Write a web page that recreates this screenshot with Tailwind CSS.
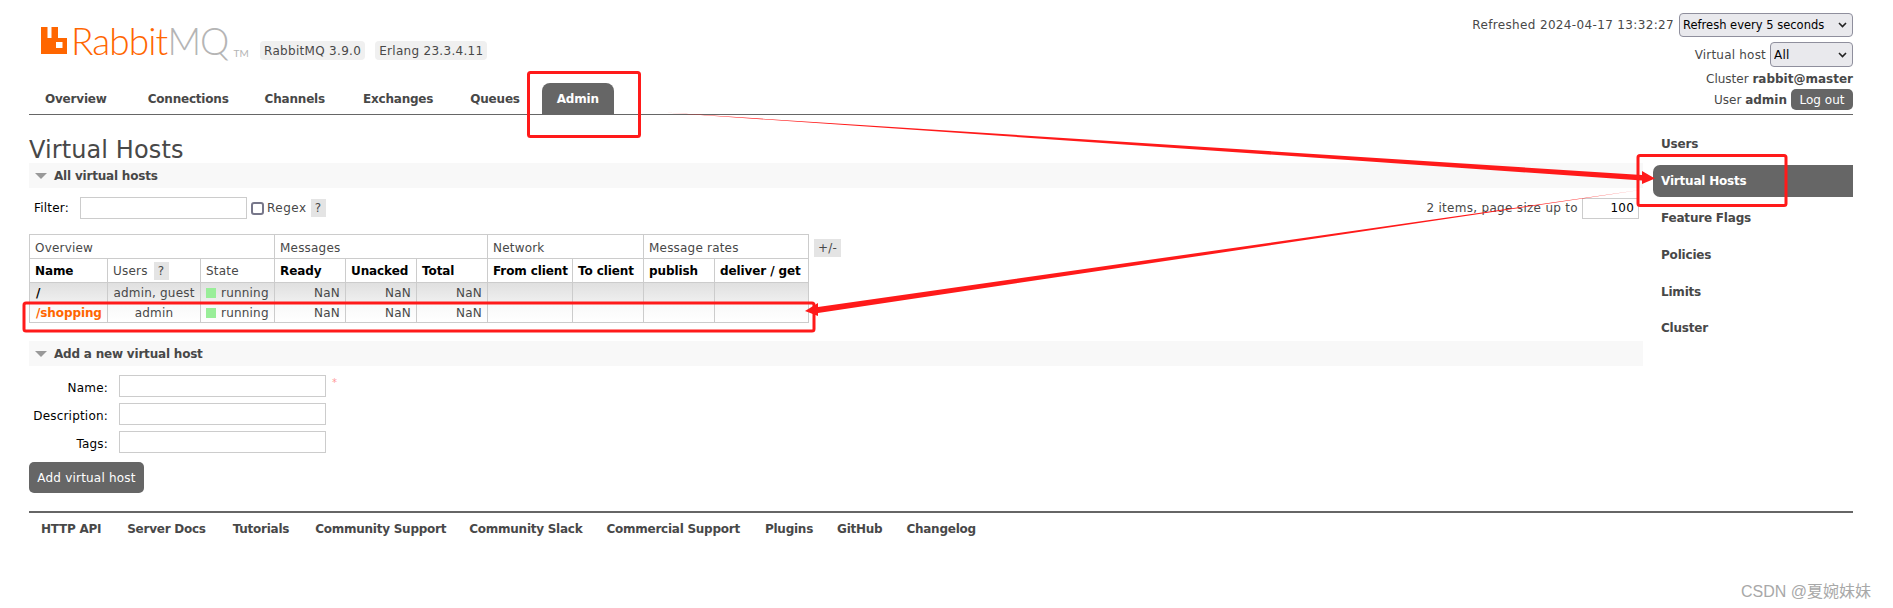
<!DOCTYPE html>
<html lang="en">

<head>
    <meta charset="UTF-8">
    <title>RabbitMQ Management</title>
    <script src="https://cdn.jsdelivr.net/npm/@tailwindcss/browser@4"></script>
</head>

<body class="relative h-[608px] w-[1893px] overflow-hidden bg-white font-['DejaVu_Sans',sans-serif] text-[12px] leading-[14px] tracking-[0.2px] text-[#484848]">

    <!-- header -->
    <header class="ml-[29px] flex h-[115px] w-[1824px] justify-between border-b border-[#666]">
        <div class="flex flex-col justify-between">
            <div class="flex pt-[20px] pl-[12px]">
                <svg width="26" height="27" viewBox="0 0 26 27" class="mt-[7px]">
                    <path fill="#ff6600" fill-rule="evenodd" d="M0 0h6.5v11h4V0H17v11h9v16H0z M15 15v6h6.5v-6z" />
                </svg>
                <span class="mt-[-2px] ml-[4px] font-['Lato',sans-serif] text-[37px] leading-[46px] font-light tracking-[-0.9px] text-[#ff6600]">Rabbit<span class="text-[#b5b5b5]">MQ</span></span>
                <span class="mt-[27px] ml-[5px] font-['Lato',sans-serif] text-[10px] leading-[12px] text-[#b5b5b5]">TM</span>
                <span class="mt-[21px] ml-[11px] h-[19px] rounded-[4px] bg-[#f0f0f0] px-[4px] leading-[20px] tracking-[0.3px]">RabbitMQ 3.9.0</span>
                <span class="mt-[21px] ml-[10px] h-[19px] rounded-[4px] bg-[#f0f0f0] px-[4px] leading-[20px] tracking-[0.3px]">Erlang 23.3.4.11</span>
            </div>
            <nav class="flex h-[32px] items-center pt-[1px] pl-[16px] font-bold tracking-[-0.2px]">
                <a class="mr-[41px]">Overview</a>
                <a class="mr-[36px]">Connections</a>
                <a class="mr-[38px]">Channels</a>
                <a class="mr-[37px]">Exchanges</a>
                <a class="mr-[22px]">Queues</a>
                <a class="flex h-[32px] w-[72px] items-center justify-center rounded-t-[8px] bg-[#666] text-white">Admin</a>
            </nav>
        </div>
        <div class="flex flex-col items-end pt-[13px]">
            <div class="flex items-center gap-[5px]">
                <span class="tracking-[0.35px]">Refreshed 2024-04-17 13:32:27</span>
                <div class="relative">
                    <select class="block h-[24px] w-[174px] appearance-none rounded-[4px] border border-[#8f8f9d] bg-[#e9e9ed] pl-[3px] text-[11.5px] tracking-normal text-black">
                        <option>Refresh every 5 seconds</option>
                    </select>
                    <svg class="pointer-events-none absolute top-[9px] right-[6px]" width="9" height="6" viewBox="0 0 9 6" fill="none" stroke="#222" stroke-width="1.6"><path d="M1 1l3.5 3.5L8 1" /></svg>
                </div>
            </div>
            <div class="mt-[5px] flex items-center gap-[4px]">
                <span>Virtual host</span>
                <div class="relative">
                    <select class="block h-[25px] w-[83px] appearance-none rounded-[4px] border border-[#8f8f9d] bg-[#e9e9ed] pl-[3px] text-black">
                        <option>All</option>
                    </select>
                    <svg class="pointer-events-none absolute top-[10px] right-[6px]" width="9" height="6" viewBox="0 0 9 6" fill="none" stroke="#222" stroke-width="1.6"><path d="M1 1l3.5 3.5L8 1" /></svg>
                </div>
            </div>
            <div class="mt-[5px] tracking-normal">Cluster <b>rabbit@master</b></div>
            <div class="mt-[3px] flex items-center gap-[4px] tracking-normal">
                <span>User <b>admin</b></span>
                <button class="h-[21px] w-[62px] rounded-[5px] bg-[#666] text-white">Log out</button>
            </div>
        </div>
    </header>

    <div class="ml-[29px] flex w-[1824px]">
        <!-- main content -->
        <main class="w-[1614px]">
            <h1 class="mt-[22px] h-[26px] text-[24px] leading-[27px] font-normal tracking-[0.1px]">Virtual Hosts</h1>

            <h2 class="flex h-[25px] items-center bg-[#f8f8f8] pl-[6px] text-[12px] font-bold tracking-[-0.2px]">
                <span class="mr-[7px] h-0 w-0 border-x-[6px] border-t-[6px] border-x-transparent border-t-[#999]"></span>
                All virtual hosts
            </h2>

            <div class="mt-[8px] flex h-[24px] items-center pl-[5px]">
                <span class="text-black">Filter:</span>
                <input type="text" class="ml-[11px] h-[22px] w-[167px] border border-[#ccc] bg-white">
                <span class="ml-[4px] h-[13px] w-[13px] rounded-[3px] border-2 border-[#77778a] bg-white"></span>
                <span class="ml-[3px] tracking-[0.5px]">Regex</span>
                <span class="ml-[4px] flex h-[18px] w-[15px] items-center justify-center bg-[#e4e4e4]">?</span>
                <span class="mr-[4px] ml-auto tracking-[0.3px]">2 items, page size up to</span>
                <input type="text" value="100" class="mr-[4px] h-[21px] w-[57px] border border-[#ccc] bg-white pr-[4px] text-right text-black">
            </div>

            <div class="mt-[14px] flex items-start">
                <table class="table-fixed border-collapse border border-[#ccc]">
                    <colgroup>
                        <col class="w-[78px]">
                        <col class="w-[93px]">
                        <col class="w-[74px]">
                        <col class="w-[71px]">
                        <col class="w-[71px]">
                        <col class="w-[71px]">
                        <col class="w-[85px]">
                        <col class="w-[71px]">
                        <col class="w-[71px]">
                        <col class="w-[94px]">
                    </colgroup>
                    <tr class="h-[24px] text-left">
                        <th colspan="3" class="border border-[#ccc] pt-[2px] pl-[5px] font-normal">Overview</th>
                        <th colspan="3" class="border border-[#ccc] pt-[2px] pl-[5px] font-normal">Messages</th>
                        <th colspan="2" class="border border-[#ccc] pt-[2px] pl-[5px] font-normal">Network</th>
                        <th colspan="2" class="border border-[#ccc] pt-[2px] pl-[5px] font-normal">Message rates</th>
                    </tr>
                    <tr class="h-[24px] text-left tracking-[-0.1px] text-black">
                        <th class="border border-[#ccc] pt-[1px] pl-[5px]">Name</th>
                        <th class="border border-[#ccc] pt-[1px] pl-[5px] font-normal tracking-[0.2px] text-[#484848]">Users <span class="ml-[2px] inline-block h-[18px] w-[15px] bg-[#e4e4e4] text-center leading-[18px]">?</span></th>
                        <th class="border border-[#ccc] pt-[1px] pl-[5px] font-normal tracking-[0.2px] text-[#484848]">State</th>
                        <th class="border border-[#ccc] pt-[1px] pl-[5px]">Ready</th>
                        <th class="border border-[#ccc] pt-[1px] pl-[5px]">Unacked</th>
                        <th class="border border-[#ccc] pt-[1px] pl-[5px]">Total</th>
                        <th class="border border-[#ccc] pt-[1px] pl-[5px]">From client</th>
                        <th class="border border-[#ccc] pt-[1px] pl-[5px]">To client</th>
                        <th class="border border-[#ccc] pt-[1px] pl-[5px]">publish</th>
                        <th class="border border-[#ccc] pt-[1px] pl-[5px]">deliver / get</th>
                    </tr>
                    <tr class="h-[20px] bg-linear-to-b from-[#e0e0e0] to-[#f0f0f0]">
                        <td class="border border-[#ccc] pl-[6px] font-bold text-black">/</td>
                        <td class="border border-[#ccc] text-center">admin, guest</td>
                        <td class="border border-[#ccc] pl-[5px]"><span class="flex items-center gap-[5px]"><i class="h-[10px] w-[10px] bg-[#99ee99]"></i>running</span></td>
                        <td class="border border-[#ccc] pr-[5px] text-right">NaN</td>
                        <td class="border border-[#ccc] pr-[5px] text-right">NaN</td>
                        <td class="border border-[#ccc] pr-[5px] text-right">NaN</td>
                        <td class="border border-[#ccc]"></td>
                        <td class="border border-[#ccc]"></td>
                        <td class="border border-[#ccc]"></td>
                        <td class="border border-[#ccc]"></td>
                    </tr>
                    <tr class="h-[20px] bg-linear-to-b from-[#f8f8f8] to-white">
                        <td class="border border-[#ccc] pl-[6px] font-bold tracking-[-0.1px] text-[#ff6600]">/shopping</td>
                        <td class="border border-[#ccc] text-center">admin</td>
                        <td class="border border-[#ccc] pl-[5px]"><span class="flex items-center gap-[5px]"><i class="h-[10px] w-[10px] bg-[#99ee99]"></i>running</span></td>
                        <td class="border border-[#ccc] pr-[5px] text-right">NaN</td>
                        <td class="border border-[#ccc] pr-[5px] text-right">NaN</td>
                        <td class="border border-[#ccc] pr-[5px] text-right">NaN</td>
                        <td class="border border-[#ccc]"></td>
                        <td class="border border-[#ccc]"></td>
                        <td class="border border-[#ccc]"></td>
                        <td class="border border-[#ccc]"></td>
                    </tr>
                </table>
                <span class="mt-[5px] ml-[5px] flex h-[18px] w-[27px] items-center justify-center bg-[#e4e4e4]">+/-</span>
            </div>

            <h2 class="mt-[18px] flex h-[25px] items-center bg-[#f8f8f8] pl-[6px] text-[12px] font-bold tracking-[-0.2px]">
                <span class="mr-[7px] h-0 w-0 border-x-[6px] border-t-[6px] border-x-transparent border-t-[#999]"></span>
                Add a new virtual host
            </h2>

            <form class="mt-[9px] flex flex-col gap-[6px] text-black">
                <div class="flex items-center">
                    <label class="mt-[4px] w-[79px] text-right">Name:</label>
                    <input type="text" class="ml-[11px] h-[22px] w-[207px] border border-[#ccc]">
                    <span class="mb-[6px] ml-[6px] text-[10px] text-[#ff9999]">*</span>
                </div>
                <div class="flex items-center">
                    <label class="mt-[4px] w-[79px] text-right">Description:</label>
                    <input type="text" class="ml-[11px] h-[22px] w-[207px] border border-[#ccc]">
                </div>
                <div class="flex items-center">
                    <label class="mt-[4px] w-[79px] text-right">Tags:</label>
                    <input type="text" class="ml-[11px] h-[22px] w-[207px] border border-[#ccc]">
                </div>
                <button type="button" class="mt-[3px] h-[31px] w-[115px] rounded-[5px] bg-[#666] text-white">Add virtual host</button>
            </form>
        </main>

        <!-- admin sidebar -->
        <aside class="mt-[13px] ml-[10px] flex w-[200px] flex-col font-bold tracking-[-0.2px]">
            <a class="flex h-[32px] items-center pl-[8px]">Users</a>
            <a class="mt-[5px] flex h-[32px] items-center rounded-l-[7px] bg-[#666] pl-[8px] text-white">Virtual Hosts</a>
            <a class="mt-[5px] flex h-[32px] items-center pl-[8px]">Feature Flags</a>
            <a class="mt-[5px] flex h-[32px] items-center pl-[8px]">Policies</a>
            <a class="mt-[5px] flex h-[32px] items-center pl-[8px]">Limits</a>
            <a class="mt-[4px] flex h-[32px] items-center pl-[8px]">Cluster</a>
        </aside>
    </div>

    <!-- footer -->
    <footer class="absolute top-[511px] left-[29px] flex h-[34px] w-[1824px] items-center gap-[24px] border-t-2 border-[#666] pl-[12px] font-bold tracking-[-0.25px]">
        <a>HTTP API</a>
        <a class="ml-[2px]">Server Docs</a>
        <a class="ml-[3px]">Tutorials</a>
        <a class="ml-[2px]">Community Support</a>
        <a class="ml-[-1px]">Community Slack</a>
        <a>Commercial Support</a>
        <a class="ml-[1px]">Plugins</a>
        <a>GitHub</a>
        <a>Changelog</a>
    </footer>

    <!-- red annotations drawn on top of the screenshot -->
    <svg class="pointer-events-none absolute top-0 left-0" width="1893" height="608" fill="none">
        <g stroke="#ff1a1a" stroke-width="3">
            <rect x="528.5" y="72.5" width="111" height="64" rx="2" />
            <rect x="1638" y="155.5" width="148" height="50" rx="2" />
            <rect x="24" y="303" width="790" height="28" rx="2" />
        </g>
        <g fill="#ff1a1a">
            <polygon points="665,112.5 1642,175 1642,171 1655,178.5 1642,184 1642,180.5" />
            <polygon points="1640,190 818,307 818,303 805,311 818,316 818,313" />
        </g>
    </svg>

    <span class="absolute top-[580px] left-[1741px] font-['Liberation_Sans','Noto_Sans_CJK_SC',sans-serif] text-[16px] leading-[24px] tracking-normal text-[#a8a8a8]">CSDN @夏婉妹妹</span>

</body>

</html>
